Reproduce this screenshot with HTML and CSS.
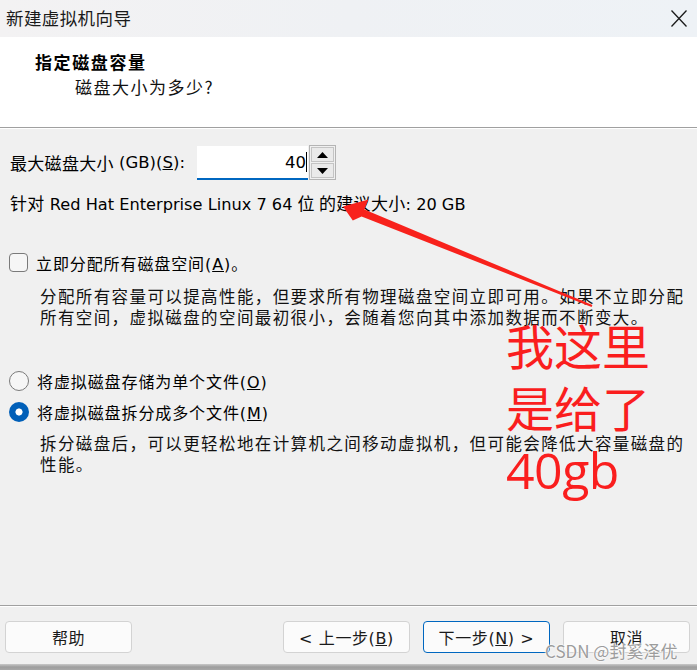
FILE: index.html
```html
<!DOCTYPE html>
<html lang="zh-CN">
<head>
<meta charset="utf-8">
<title>新建虚拟机向导</title>
<link rel="stylesheet" href="styles.css">
</head>
<body>
<div class="window">
  <div class="titlebar">
    <span class="title">新建虚拟机向导</span>
    <svg class="close" width="16" height="17" viewBox="0 0 16 17"><path d="M0.5 0.5 L15.5 16.5 M15.5 0.5 L0.5 16.5" stroke="#1b1b1b" stroke-width="1.3" fill="none"/></svg>
  </div>
  <div class="header">
    <div class="h-title">指定磁盘容量</div>
    <div class="h-sub">磁盘大小为多少?</div>
  </div>
  <div class="content">
    <div class="size-row">
      <label class="size-label"><span class="zh">最大磁盘大小</span> (GB)(<u>S</u>):</label>
      <div class="input">40<span class="caret"></span></div>
      <div class="spin">
        <div class="spin-btn"><svg width="11" height="6" viewBox="0 0 11 6"><path d="M5.5 0 L11 6 L0 6 Z" fill="#000"/></svg></div>
        <div class="spin-btn"><svg width="11" height="6" viewBox="0 0 11 6"><path d="M0 0 L11 0 L5.5 6 Z" fill="#000"/></svg></div>
      </div>
    </div>
    <div class="hint"><span class="zh">针对</span> Red Hat Enterprise Linux 7 64 <span class="zh">位 的建议大小</span>: 20 GB</div>
    <div class="option check-row"><span class="checkbox"></span><span>立即分配所有磁盘空间(<u>A</u>)。</span></div>
    <p class="desc">分配所有容量可以提高性能，但要求所有物理磁盘空间立即可用。如果不立即分配所有空间，虚拟磁盘的空间最初很小，会随着您向其中添加数据而不断变大。</p>
    <div class="option radio-row first"><span class="radio"></span><span>将虚拟磁盘存储为单个文件(<u>O</u>)</span></div>
    <div class="option radio-row"><span class="radio on"></span><span>将虚拟磁盘拆分成多个文件(<u>M</u>)</span></div>
    <p class="desc desc2">拆分磁盘后，可以更轻松地在计算机之间移动虚拟机，但可能会降低大容量磁盘的性能。</p>
  </div>
  <div class="footer">
    <button class="btn help">帮助</button>
    <button class="btn">&lt; 上一步(<u>B</u>)</button>
    <button class="btn primary">下一步(<u>N</u>) &gt;</button>
    <button class="btn">取消</button>
  </div>
  <div class="edge"></div>

  <svg class="arrow" width="697" height="670" viewBox="0 0 697 670">
    <polygon fill="#f8221c" points="592.4,305.1 364.4,209.6 368.5,199.5 343,206.5 352.8,220.5 361.6,216.4 591.6,306.9"/>
  </svg>
  <div class="note">我这里<br>是给了<br><span class="note-latin">40gb</span></div>
  <div class="watermark">CSDN @封奚泽优</div>
</div>
</body>
</html>
```
FILE: styles.css
```css
* { box-sizing: border-box; }
html, body { margin: 0; padding: 0; }
body {
  width: 697px;
  height: 670px;
  overflow: hidden;
  background: #f0f0f0;
  font-family: "DejaVu Sans", "Noto Sans CJK SC", sans-serif;
  color: #000;
}
.window {
  position: relative;
  width: 697px;
  height: 670px;
  display: flex;
  flex-direction: column;
  background: #f0f0f0;
}
.titlebar {
  height: 37px;
  flex: none;
  display: flex;
  align-items: center;
  justify-content: space-between;
  padding: 0 10px 3px 6px;
  background: linear-gradient(90deg, #f3f2f3 0%, #eff1f4 50%, #eef2f6 100%);
}
.titlebar .title {
  font-family: "Noto Sans CJK SC", sans-serif;
  font-size: 17.5px;
  color: #1a1a1a;
  letter-spacing: 0.4px;
}
.close { margin-top: 3px; }
.header {
  height: 91px;
  flex: none;
  background: #fff;
  border-bottom: 1px solid #a0a0a0;
  padding: 14px 0 0 35px;
}
.h-title {
  font-family: "Noto Sans CJK SC", sans-serif;
  font-weight: 700;
  font-size: 17px;
  line-height: 22px;
  letter-spacing: 1.6px;
}
.h-sub {
  font-family: "Noto Sans CJK SC", sans-serif;
  font-size: 17px;
  line-height: 22px;
  margin: 3px 0 0 40px;
  letter-spacing: 1.5px;
  color: #111;
}
.zh {
  font-family: "Noto Sans CJK SC", sans-serif;
  font-size: 17px;
  letter-spacing: 0.3px;
}
.content {
  flex: 1;
  padding: 0 10px;
  box-shadow: inset 0 1px 0 #fff;
}
.size-row {
  display: flex;
  align-items: stretch;
  margin-top: 17px;
  height: 35px;
}
.size-label {
  width: 187px;
  display: flex;
  align-items: center;
  white-space: pre;
  font-size: 16.5px;
}
.input {
  width: 111px;
  margin-top: 1px;
  background: #fff;
  border-bottom: 2px solid #0067c0;
  display: flex;
  align-items: center;
  justify-content: flex-end;
  padding-right: 1px;
  font-size: 16.5px;
}
.caret {
  display: inline-block;
  width: 1px;
  height: 20px;
  background: #000;
}
.spin {
  width: 27px;
  margin-left: 1px;
  border: 1px solid #b4b4b4;
  padding: 1px;
  display: flex;
  flex-direction: column;
  gap: 1px;
}
.spin-btn {
  flex: 1;
  background: #eaeaea;
  border: 1px solid #c4c4c4;
  display: flex;
  align-items: center;
  justify-content: center;
}
.hint {
  margin-top: 12px;
  font-size: 16.2px;
  line-height: 21px;
}
.option {
  display: flex;
  align-items: center;
  gap: 8px;
  height: 21px;
  font-size: 16px;
  letter-spacing: 0.9px;
}
.check-row { margin-top: 37px; margin-left: -1px; }
.checkbox {
  width: 19px;
  height: 19px;
  border: 1px solid #7a7a7a;
  border-radius: 4px;
  background: #f6f6f6;
  flex: none;
}
.desc {
  margin: 13px -14px 0 30px;
  font-family: "Noto Sans CJK SC", sans-serif;
  font-size: 16.5px;
  line-height: 21px;
  letter-spacing: 1.4px;
  color: #111;
}
.radio-row { margin-top: 10px; margin-left: -1px; }
.radio-row.first { margin-top: 42px; }
.radio {
  width: 20px;
  height: 20px;
  border-radius: 50%;
  border: 1px solid #7a7a7a;
  background: #f6f6f6;
  flex: none;
}
.radio.on {
  border: none;
  background: radial-gradient(circle, #fff 0 3.2px, #005fb8 3.9px);
}
.desc2 { margin-top: 11px; }
.footer {
  flex: none;
  height: 59px;
  border-top: 1px solid #a0a0a0;
  box-shadow: inset 0 1px 0 #fff;
  display: flex;
  align-items: flex-start;
  gap: 13px;
  padding: 15px 7px 0 5px;
}
.btn {
  width: 127px;
  height: 32px;
  background: #fbfbfb;
  border: 1px solid #d3d3d3;
  border-radius: 4px;
  font-family: "DejaVu Sans", "Noto Sans CJK SC", sans-serif;
  font-size: 16px;
  color: #1a1a1a;
  padding: 0;
  letter-spacing: 0.6px;
}
.btn.help { margin-right: auto; }
.btn.primary { border-color: #0067c0; }
.edge {
  flex: none;
  height: 6px;
  background: linear-gradient(#c9c9c9, #9d9d9d 50%, #a8a8a8);
}
.arrow {
  position: absolute;
  left: 0;
  top: 0;
  pointer-events: none;
}
.note {
  position: absolute;
  left: 506px;
  top: 313px;
  font-family: "Noto Sans CJK SC", sans-serif;
  font-size: 48px;
  line-height: 62px;
  color: #fa1e1e;
}
.note-latin {
  font-family: "Open Sans", sans-serif;
  font-size: 50px;
  letter-spacing: -0.5px;
}
.watermark {
  position: absolute;
  left: 545px;
  top: 638px;
  font-family: "Noto Sans CJK SC", sans-serif;
  font-size: 17px;
  color: #9c9c9c;
  text-shadow: 0 0 2px #fff, 0 0 2px #fff, 0 0 1px #fff;
}
```
